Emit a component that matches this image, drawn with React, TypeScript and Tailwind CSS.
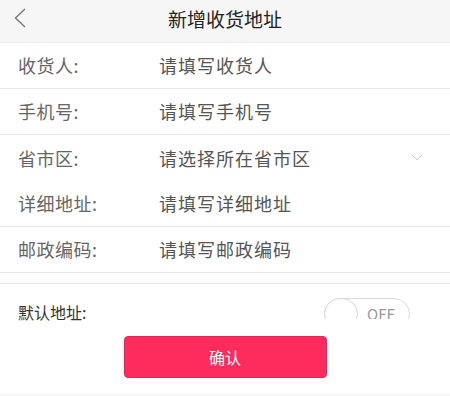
import React from "react";

const font = { fontFamily: '"Noto Sans CJK SC", "Noto Sans", sans-serif' };

const rows = [
  { label: "收货人:", placeholder: "请填写收货人", border: true },
  { label: "手机号:", placeholder: "请填写手机号", border: true },
  { label: "省市区:", placeholder: "请选择所在省市区", border: false, select: true },
  { label: "详细地址:", placeholder: "请填写详细地址", border: true },
  { label: "邮政编码:", placeholder: "请填写邮政编码", border: true },
];

export default function App() {
  return (
    <div className="w-[450px] h-[396px] bg-white overflow-hidden" style={font}>
      {/* header */}
      <div className="relative h-[43px] bg-[#f6f6f6] border-b border-[#ebebeb] flex items-center justify-center">
        <svg className="absolute left-[13px] top-[8px]" width="14" height="20" viewBox="0 0 14 20" fill="none">
          <path d="M12 1 L2.5 10 L12 19" stroke="#777" strokeWidth="1.4" />
        </svg>
        <h1 className="text-[19px] text-[#222] leading-none -mt-[6px]">新增收货地址</h1>
      </div>

      {/* form rows */}
      <div>
        {rows.map((r) => (
          <div
            key={r.label}
            className={`flex items-center h-[46px] ${r.border ? "border-b border-[#e6e6e6]" : ""}`}
          >
            <span className="w-[159px] shrink-0 pl-[18px] text-[18px] text-[#666] tracking-[0.5px]">{r.label}</span>
            <span className="flex-1 text-[18px] text-[#555] tracking-[1px]">{r.placeholder}</span>
            {r.select && (
              <svg className="mr-[27px]" width="12" height="8" viewBox="0 0 12 8" fill="none">
                <path d="M1 1 L6 6 L11 1" stroke="#ccc" strokeWidth="1" />
              </svg>
            )}
          </div>
        ))}
      </div>

      <div className="h-[11px] bg-[#fdfdfd] border-b border-[#e6e6e6]" />

      {/* default address */}
      <div className="flex items-start h-[52px]">
        <span className="pl-[18px] pt-[16px] text-[16px] text-[#333]">默认地址:</span>
        <div className="ml-auto mr-[40px] mt-[14px] h-[21px] overflow-hidden">
          <div className="w-[86px] h-[32px] rounded-full border border-[#dcdcdc] flex items-center">
            <div className="w-[34px] h-[32px] rounded-full border border-[#d6d6d6] bg-white -ml-px" />
            <span className="ml-[9px] text-[15px] text-[#999] leading-none -mt-[2px]">OFF</span>
          </div>
        </div>
      </div>

      {/* confirm */}
      <div className="flex justify-center">
        <button className="w-[203px] h-[42px] rounded-[4px] bg-[#fd2c5d] border border-[#e0285a] text-white text-[16px]">
          确认
        </button>
      </div>

      <div className="mt-[16px] h-[10px] bg-[#f7f7f7]" />
    </div>
  );
}
